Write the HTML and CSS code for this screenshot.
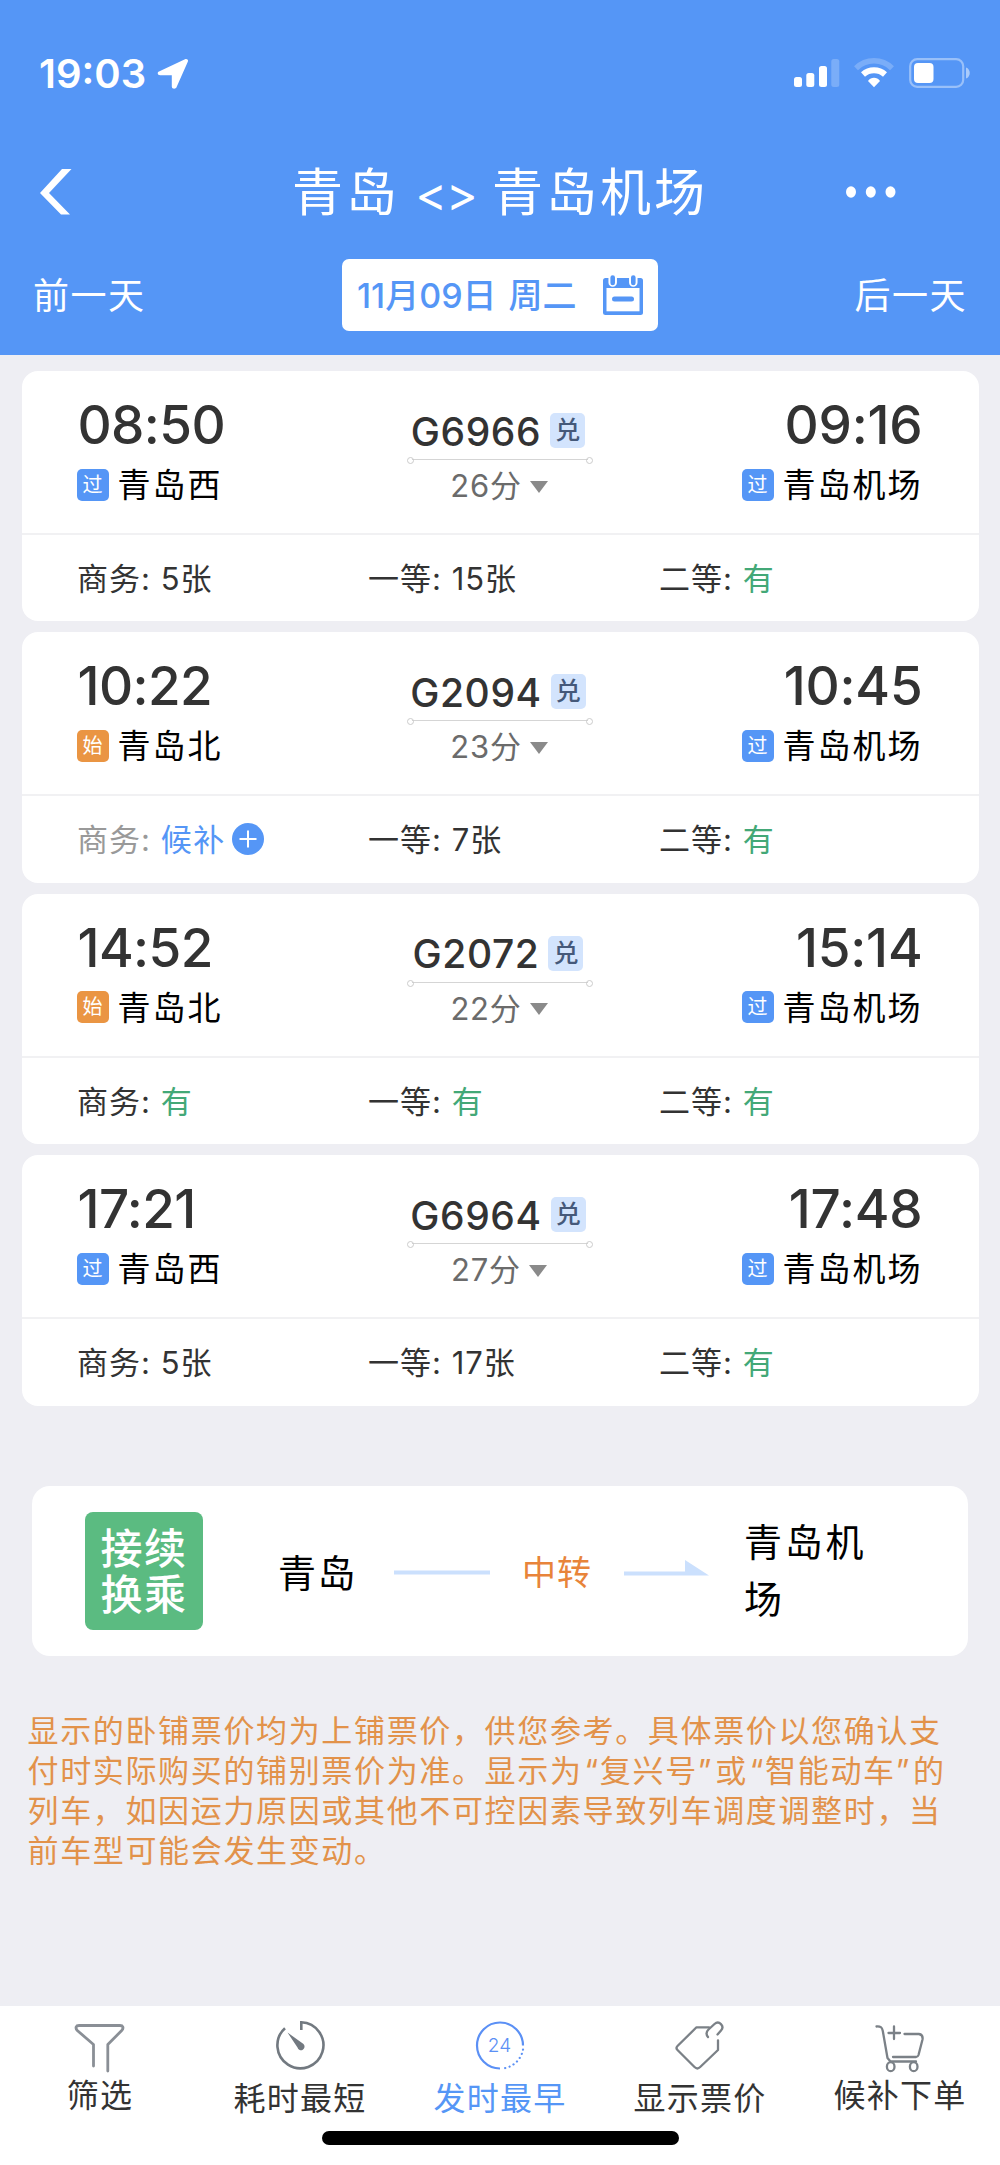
FILE: index.html
```html
<!DOCTYPE html>
<html lang="zh-CN">
<head>
  <meta charset="UTF-8">
  <meta name="viewport" content="width=device-width, initial-scale=1.0">
  <title>青岛 - 青岛机场</title>
  <link rel="stylesheet" href="styles.css">
</head>
<body>

  <div class="header">
    <div class="status">
      <span class="clock">19:03</span>
      <svg class="location" width="32" height="32" viewBox="0 0 32 32"><path d="M2 13.500 28 1.200c2-.8 3.600.6 2.800 2.600L19.500 29.300c-1 2.200-4.700 1.800-4.700-.8V17.300H3.200C.6 17.300-.2 14.500 2 13.500z" fill="#fff"/></svg>
      <svg class="signal" width="178" height="32" viewBox="0 0 178 32" fill="#fff">
        <rect x="1" y="19" width="8" height="10" rx="2.500"/>
        <rect x="13.300" y="15" width="8" height="14" rx="2.500"/>
        <rect x="26" y="8" width="8" height="21" rx="2.500"/>
        <rect x="38.300" y="1" width="8" height="28" rx="2.500" opacity=".22"/>
        <path d="M63 10.300a25.500 25.500 0 0 1 36 0" fill="none" stroke="#fff" stroke-width="5.500" opacity=".22"/>
        <path d="M70 16.500a16.500 16.500 0 0 1 22 0" fill="none" stroke="#fff" stroke-width="6"/>
        <path d="M81 29.300l-6-6.300c3-4.200 9-4.200 12 0z"/>
        <rect x="117.200" y="1.200" width="53" height="27.600" rx="7" fill="none" stroke="#fff" stroke-width="2.200" opacity=".4"/>
        <rect x="121" y="5" width="19.500" height="20" rx="4"/>
        <path d="M173 9.500c5 1.500 5 9.500 0 11z" opacity=".5"/>
      </svg>
    </div>

    <div class="navbar">
      <svg class="back" width="32" height="46" viewBox="0 0 32 46"><path d="M22 0h9.500L9 24l21 21.500h-9L0 24z" fill="#fff"/></svg>
      <h1>青岛 <span class="swap">&lt;&gt;</span> 青岛机场</h1>
      <svg class="more" width="50" height="12" viewBox="0 0 50 12" fill="#fff"><ellipse cx="5" cy="6" rx="5" ry="5.700"/><ellipse cx="24.800" cy="6" rx="5" ry="5.700"/><ellipse cx="44.500" cy="6" rx="5" ry="5.700"/></svg>
    </div>

    <div class="datebar">
      <span class="day">前一天</span>
      <div class="date">
        <span>11月09日</span><span class="week">周二</span>
        <svg width="40" height="40" viewBox="0 0 40 40">
          <rect x="0" y="3" width="40" height="37" rx="2.500" fill="#5596f6"/>
          <rect x="3.500" y="13" width="33" height="23.300" fill="#fff"/>
          <path d="M9.700 2v5.500M30.300 2v5.500" stroke="#fff" stroke-width="8.500" stroke-linecap="round"/>
          <path d="M9.700 2.500v5.500M30.300 2.500v5.500" stroke="#5596f6" stroke-width="4.600" stroke-linecap="round"/>
          <path d="M11.500 24h17" stroke="#5596f6" stroke-width="5" stroke-linecap="round"/>
        </svg>
      </div>
      <span class="day">后一天</span>
    </div>
  </div>

  <div class="content">
    <div class="card">
      <div class="trip">
        <div class="stop">
          <div class="time">08:50</div>
          <div class="station"><span class="tag">过</span>青岛西</div>
        </div>
        <div class="train">
          <div class="number">G6966<span class="redeem">兑</span></div>
          <div class="line"></div>
          <div class="duration">26分<i class="arrow"></i></div>
        </div>
        <div class="stop end">
          <div class="time">09:16</div>
          <div class="station"><span class="tag">过</span>青岛机场</div>
        </div>
      </div>
      <div class="seats">
        <div>商务: 5张</div>
        <div>一等: 15张</div>
        <div>二等: <span class="ok">有</span></div>
      </div>
    </div>

    <div class="card">
      <div class="trip">
        <div class="stop">
          <div class="time">10:22</div>
          <div class="station"><span class="tag first">始</span>青岛北</div>
        </div>
        <div class="train">
          <div class="number">G2094<span class="redeem">兑</span></div>
          <div class="line"></div>
          <div class="duration">23分<i class="arrow"></i></div>
        </div>
        <div class="stop end">
          <div class="time">10:45</div>
          <div class="station"><span class="tag">过</span>青岛机场</div>
        </div>
      </div>
      <div class="seats">
        <div class="none">商务: <span class="wait">候补</span><svg class="plus" width="32" height="32" viewBox="0 0 32 32"><circle cx="16" cy="16" r="16" fill="#5596f6"/><path d="M16 7.500v17M7.500 16h17" stroke="#fff" stroke-width="2"/></svg></div>
        <div>一等: 7张</div>
        <div>二等: <span class="ok">有</span></div>
      </div>
    </div>

    <div class="card">
      <div class="trip">
        <div class="stop">
          <div class="time">14:52</div>
          <div class="station"><span class="tag first">始</span>青岛北</div>
        </div>
        <div class="train">
          <div class="number">G2072<span class="redeem">兑</span></div>
          <div class="line"></div>
          <div class="duration">22分<i class="arrow"></i></div>
        </div>
        <div class="stop end">
          <div class="time">15:14</div>
          <div class="station"><span class="tag">过</span>青岛机场</div>
        </div>
      </div>
      <div class="seats">
        <div>商务: <span class="ok">有</span></div>
        <div>一等: <span class="ok">有</span></div>
        <div>二等: <span class="ok">有</span></div>
      </div>
    </div>

    <div class="card">
      <div class="trip">
        <div class="stop">
          <div class="time">17:21</div>
          <div class="station"><span class="tag">过</span>青岛西</div>
        </div>
        <div class="train">
          <div class="number">G6964<span class="redeem">兑</span></div>
          <div class="line"></div>
          <div class="duration">27分<i class="arrow"></i></div>
        </div>
        <div class="stop end">
          <div class="time">17:48</div>
          <div class="station"><span class="tag">过</span>青岛机场</div>
        </div>
      </div>
      <div class="seats">
        <div>商务: 5张</div>
        <div>一等: 17张</div>
        <div>二等: <span class="ok">有</span></div>
      </div>
    </div>

    <!-- 接续换乘 -->
    <div class="transfer">
      <div class="logo"><span>接续</span><span>换乘</span></div>
      <span class="from">青岛</span>
      <svg class="dash" width="96" height="30" viewBox="0 0 96 30"><path d="M0 16.500h96" stroke="#cbe0fd" stroke-width="4"/></svg>
      <span class="via">中转</span>
      <svg class="dash" width="85" height="30" viewBox="0 0 85 30"><path d="M0 15.500h61V4l24 15.500H0z" fill="#cbe0fd"/></svg>
      <span class="to">青岛机<br>场</span>
    </div>

    <p class="notice">显示的卧铺票价均为上铺票价，供您参考。具体票价以您确认支<br>付时实际购买的铺别票价为准。显示为<span class="name">“复兴号”</span>或<span class="name">“智能动车”</span>的<br>列车，如因运力原因或其他不可控因素导致列车调度调整时，当<br>前车型可能会发生变动。</p>
  </div>

  <div class="tabs">
    <div class="tab raised">
      <svg width="52" height="52" viewBox="0 0 52 52" fill="none" stroke="#8a8f96" stroke-width="2.800" stroke-linecap="round" stroke-linejoin="round"><path d="M19.500 45V23.500L3.300 9.500C1 7 2 4.500 5 4.500h41c3 0 4 2.500 1.700 5L33.800 23.500V50"/></svg>
      <span>筛选</span>
    </div>
    <div class="tab">
      <svg width="52" height="52" viewBox="0 0 52 52" fill="none" stroke="#727980" stroke-width="2.600"><path d="M27.300 9V1.300A23 23 0 1 1 11 7.200"/><path d="M13.500 11.500 29.500 23a3.600 3.600 0 1 1-6 3.500z" fill="#727980" stroke="none"/></svg>
      <span>耗时最短</span>
    </div>
    <div class="tab active">
      <svg width="52" height="52" viewBox="0 0 52 52" fill="none" stroke="#5b90f5" stroke-width="2.200"><path d="M26 47.500A23 23 0 1 1 49 24.500"/><path d="M49 28.500A23 23 0 0 1 28 47.500" stroke-linecap="round" stroke-dasharray=".1 4.400"/><text x="25.500" y="31" text-anchor="middle" class="hours">24</text></svg>
      <span>发时最早</span>
    </div>
    <div class="tab">
      <svg width="52" height="52" viewBox="0 0 52 52" fill="none" stroke="#7b8187" stroke-width="2.300" stroke-linecap="round" stroke-linejoin="round"><path d="M35 6.300H22.500L3.500 25c-1.200 1.200-1.200 2.800 0 4L20.500 46c1.700 1.700 4 1.700 5.700 0L44 29V19.300"/><path d="M34 16c-2-2.500-2-5 .500-7.500L40.500 3c4.500-4 10.500 2 6.500 6.500L43.500 13.500"/></svg>
      <span>显示票价</span>
    </div>
    <div class="tab raised">
      <svg width="52" height="52" viewBox="0 0 52 52" fill="none" stroke="#7b8187" stroke-width="2.300" stroke-linecap="round" stroke-linejoin="round"><path d="M2.500 5.500c4-.300 5.500.500 6.300 4.500L13.500 37l3 3.500H42"/><path d="M20 5.500v12.500M14.500 12h11.500M30.500 13H45c3 .5 4 2.500 3.500 5.500L44.500 34c-.5 1.500-1 2-2.500 2H19"/><ellipse cx="16.700" cy="45.700" rx="3.800" ry="4.500"/><ellipse cx="39.700" cy="45.700" rx="3.800" ry="4.500"/></svg>
      <span>候补下单</span>
    </div>
  </div>
  <div class="home"><i></i></div>

</body>
</html>
```

FILE: styles.css
```css
* { box-sizing: border-box; }
body { margin: 0; height: 2165px; display: flex; flex-direction: column; background: #eeeef3; font-family: Inter, "Noto Sans CJK SC", sans-serif; color: #333; }
svg { display: block; flex: none; }

.header { height: 355px; background: #5596f6; color: #fff; }
.status { display: flex; align-items: center; height: 146px; padding: 2px 29px 0 39px; }
.clock { font-size: 40px; font-weight: 600; line-height: 50px; width: 118px; }
.location { margin-bottom: 1px; }
.signal { margin-left: auto; }
.navbar { display: flex; align-items: center; height: 92px; padding: 0 104px 0 40px; }
.navbar h1 { flex: 1; margin: 0; padding: 3px 0 0 82px; text-align: center; font-size: 51px; font-weight: 400; line-height: 60px; letter-spacing: 3px; word-spacing: -2px; white-space: nowrap; }
.swap { letter-spacing: -1px; font-size: 48px; }
.datebar { display: flex; justify-content: space-between; align-items: center; height: 114px; padding: 0 33px; }
.day { padding-top: 2px; font-size: 36px; line-height: 50px; letter-spacing: 1.500px; }
.date { display: flex; align-items: center; height: 72px; width: 316px; padding: 0 15px; background: #fff; border-radius: 7px; color: #5596f6; font-size: 34px; font-weight: 500; }
.date span { padding-bottom: 4px; }
.date svg { margin-left: auto; }
.date .week { margin-left: 12px; }

.content { flex: 1; padding: 16px 21.500px 0; }
.card { height: 250.400px; margin-bottom: 11px; background: #fff; border-radius: 16px; }
.trip { display: flex; justify-content: space-between; height: 164px; padding: 0 56px 0 55px; border-bottom: 2px solid #f1f1f3; }
.stop { width: 240px; padding-top: 22px; }
.time { margin-left: 1px; font-size: 53px; font-weight: 500; line-height: 64px; letter-spacing: -.600px; }
.station { display: flex; align-items: center; height: 52px; color: #000; font-size: 33px; letter-spacing: 2px; }
.end { text-align: right; }
.end .time { letter-spacing: -.200px; }
.end .station { justify-content: flex-end; }
.tag { width: 32px; height: 32px; margin: 3px 9px 0 0; border-radius: 5px; background: #5596f6; color: #fff; font-size: 20px; line-height: 32px; text-align: center; letter-spacing: 0; }
.tag.first { background: #ea9543; }

.train { width: 186px; padding-top: 34px; }
.number { display: flex; justify-content: center; align-items: center; height: 52px; padding-right: 3px; font-size: 39px; font-weight: 500; letter-spacing: .600px; }
.redeem { width: 35px; height: 35px; margin: -1px 0 0 9px; border-radius: 5px; background: #d3e4fd; color: #45597a; font-size: 25px; line-height: 34px; text-align: center; font-weight: 500; letter-spacing: 0; }
.line { position: relative; height: 5px; background: linear-gradient(#d5d5d5, #d5d5d5) center / 176px 1px no-repeat; }
.line::before, .line::after { content: ""; position: absolute; top: 0; width: 5px; height: 5px; border: 1px solid #ccc; border-radius: 50%; }
.line::before { left: 0; }
.line::after { right: 0; }
.duration { display: flex; justify-content: center; align-items: center; height: 43px; padding-right: 1px; font-size: 31px; letter-spacing: .800px; color: #6b6b6b; }
.arrow { margin: 6px 0 0 8px; border: solid transparent; border-width: 12px 9.500px 0; border-top-color: #8a8a8a; }

.seats { display: grid; grid-template-columns: 291px 291px 1fr; align-items: center; height: 83px; padding-left: 55.500px; font-size: 31px; letter-spacing: 1px; }
.seats > div { display: flex; align-items: center; white-space: pre; }
.ok { color: #43a877; }
.none { color: #999; }
.wait { color: #5596f6; letter-spacing: 1.600px; }
.plus { margin: 2px 0 0 6px; }

.transfer { display: flex; align-items: center; height: 170px; margin: 80px 10.500px 0; padding-left: 53px; background: #fff; border-radius: 18px; color: #000; font-size: 38px; letter-spacing: 1.500px; }
.logo { display: flex; flex-direction: column; align-items: center; width: 118px; height: 118px; padding-top: 14px; border-radius: 8px; background: #5bbb81; color: #fff; font-size: 42px; font-weight: 500; line-height: 46px; letter-spacing: 1.500px; }
.from { width: 116px; margin-left: 75px; }
.via { width: 102px; margin-left: 32px; color: #e8843a; font-size: 34px; letter-spacing: 1px; }
.to { margin: 1px 0 0 35px; line-height: 57px; letter-spacing: 2.800px; }
.notice { margin: 55px 0 0 6px; color: #e2924a; font-size: 31px; line-height: 40px; letter-spacing: 1.650px; white-space: nowrap; }
.name { padding: 0 2px; }

.tabs { display: flex; height: 125px; background: #fff; }
.tab { flex: 1; display: flex; flex-direction: column; align-items: center; padding-top: 15px; font-size: 32px; line-height: 48px; letter-spacing: 1.200px; }
.tab span { margin-top: 2px; }
.raised span { margin-top: -1px; }
.active { color: #5596f6; }
.hours { font: 300 19px Inter, sans-serif; fill: #5b90f5; stroke: none; letter-spacing: 0; }
.home { height: 34px; background: #fff; }
.home i { display: block; width: 357px; height: 14px; margin: 0 auto; border-radius: 7px; background: #000; }
```
